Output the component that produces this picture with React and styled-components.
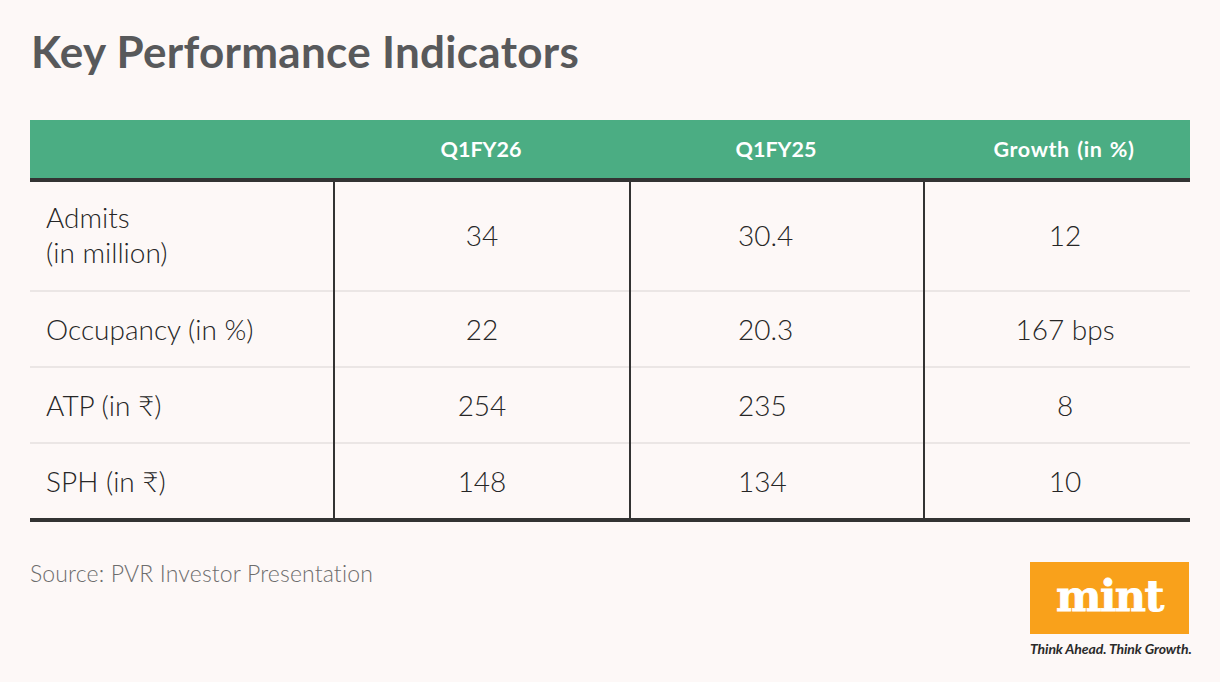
import React from "react";
import styled, { createGlobalStyle } from "styled-components";

const Global = createGlobalStyle`
  *, *::before, *::after { box-sizing: border-box; }
  html, body { margin: 0; padding: 0; background: #fdf8f7; }
  body { font-family: Lato, "Open Sans", sans-serif; width: 1220px; height: 682px; overflow: hidden; }
`;

const Page = styled.div`
  padding: 26px 30px 0 30px;
`;

const Title = styled.h1`
  margin: 0 0 0 1px;
  font-family: Lato, sans-serif;
  font-weight: 700;
  font-size: 44px;
  line-height: 50px;
  color: #58595b;
  letter-spacing: 0.3px;
`;

const Table = styled.div`
  margin-top: 44px;
  width: 1160px;
  border-bottom: 4px solid #333333;
`;

const cols = "303px 296px 294px 267px";

const HeaderRow = styled.div`
  display: grid;
  grid-template-columns: ${cols};
  height: 62px;
  background: #4bad83;
  border-bottom: 4px solid #333333;
`;

const HeadCell = styled.div`
  display: flex;
  align-items: center;
  justify-content: center;
  padding-left: ${(p) => p.$shift || 0}px;
  color: #ffffff;
  font-weight: 700;
  font-size: 21.5px;
  word-spacing: ${(p) => p.$ws || 0}px;
  letter-spacing: ${(p) => p.$ls || 0}px;
`;

const BodyRow = styled.div`
  display: grid;
  grid-template-columns: ${cols};
  height: ${(p) => p.$h}px;
  border-bottom: ${(p) => (p.$last ? "none" : "2px solid #ebe6e5")};
`;

const Cell = styled.div`
  display: flex;
  align-items: center;
  justify-content: ${(p) => p.$justify || "center"};
  padding-left: ${(p) => p.$pad || 0}px;
  padding-bottom: ${(p) => p.$lift || 0}px;
  border-left: ${(p) => (p.$first ? "none" : "2px solid #333333")};
  margin-bottom: ${(p) => (p.$last ? 0 : -2)}px;
  font-weight: 300;
  font-size: 28px;
  line-height: 35px;
  color: #262626;
`;

const Footer = styled.div`
  display: flex;
  justify-content: space-between;
  align-items: flex-start;
  margin-top: 40px;
  width: 1160px;
`;

const Source = styled.div`
  font-weight: 300;
  font-size: 23px;
  line-height: 24px;
  letter-spacing: 0.15px;
  margin-top: -1px;
  color: #6d6d6d;
`;

const Logo = styled.div`
  display: flex;
  flex-direction: column;
  width: 160px;
`;

const LogoBox = styled.div`
  width: 159px;
  height: 72px;
  background: #f9a11b;
  display: flex;
  align-items: center;
  justify-content: center;
`;

const LogoWord = styled.span`
  font-family: "DejaVu Serif", serif;
  font-weight: 700;
  font-size: 43px;
  letter-spacing: -1.5px;
  color: #ffffff;
  line-height: 1;
  margin-top: -4px;
  -webkit-text-stroke: 0.8px #ffffff;
`;

const Tagline = styled.div`
  margin-top: 6px;
  font-family: Lato, sans-serif;
  font-style: italic;
  font-weight: 700;
  font-size: 14px;
  letter-spacing: -0.1px;
  color: #2a2a2a;
  white-space: nowrap;
`;

const rows = [
  { label: ["Admits", "(in million)"], a: "34", b: "30.4", c: "12", h: 110, lift: 4 },
  { label: ["Occupancy (in %)"], a: "22", b: "20.3", c: "167 bps", h: 76, lift: 2 },
  { label: ["ATP (in ₹)"], a: "254", b: "235", c: "8", h: 76, lift: 2 },
  { label: ["SPH (in ₹)"], a: "148", b: "134", c: "10", h: 74, lift: 0 },
];

export default function App() {
  return (
    <>
      <Global />
      <Page>
        <Title>Key Performance Indicators</Title>
        <Table>
          <HeaderRow>
            <HeadCell />
            <HeadCell>Q1FY26</HeadCell>
            <HeadCell>Q1FY25</HeadCell>
            <HeadCell $shift={15} $ws={1.5} $ls={0.6}>
              Growth (in %)
            </HeadCell>
          </HeaderRow>
          {rows.map((r, i) => {
            const last = i === rows.length - 1;
            return (
              <BodyRow key={i} $h={r.h} $last={last}>
                <Cell $first $justify="flex-start" $pad={16} $last={last} $lift={r.lift}>
                  <div>
                    {r.label.map((l, j) => (
                      <div key={j}>{l}</div>
                    ))}
                  </div>
                </Cell>
                <Cell $last={last} $lift={r.lift}>{r.a}</Cell>
                <Cell $last={last} $justify="flex-start" $pad={107} $lift={r.lift}>
                  {r.b}
                </Cell>
                <Cell $last={last} $pad={15} $lift={r.lift}>
                  {r.c}
                </Cell>
              </BodyRow>
            );
          })}
        </Table>
        <Footer>
          <Source>Source: PVR Investor Presentation</Source>
          <Logo>
            <LogoBox>
              <LogoWord>mint</LogoWord>
            </LogoBox>
            <Tagline>Think Ahead. Think Growth.</Tagline>
          </Logo>
        </Footer>
      </Page>
    </>
  );
}
